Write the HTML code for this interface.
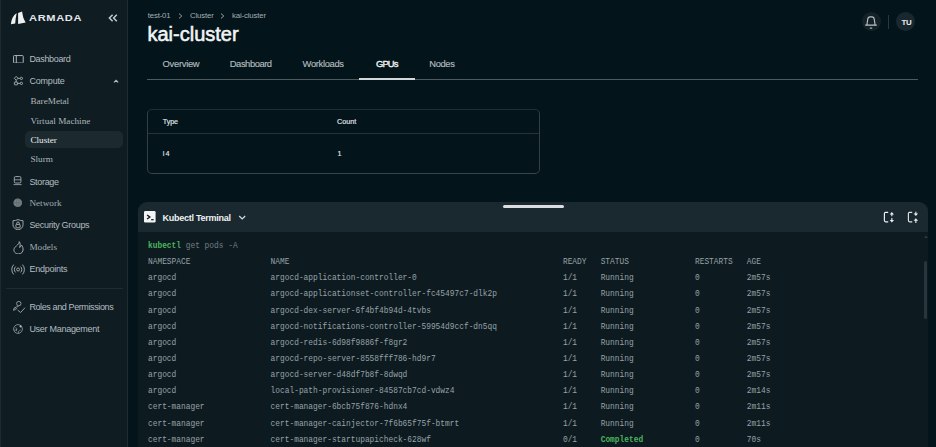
<!DOCTYPE html>
<html><head><meta charset="utf-8">
<style>
*{box-sizing:border-box;margin:0;padding:0}
html,body{width:936px;height:447px;overflow:hidden;background:#03141a;-webkit-font-smoothing:antialiased;font-family:"Liberation Sans",sans-serif;color:#c9d1d4}
.a{position:absolute;white-space:nowrap;line-height:1}
#side{position:absolute;left:0;top:0;width:128px;height:447px;background:#0f1c22;border-right:1px solid #1e2b31;border-left:1px solid #20292d}
.brand{left:27.9px;top:14px;font-size:8.4px;font-weight:bold;letter-spacing:0.5px;color:#e4e8ea;transform-origin:0 0;transform:scaleX(1.32)}
.nav{font-size:9px;color:#b3bdc1;left:28.4px}
.sub{font-family:"Liberation Serif",serif;font-size:9.2px;color:#aeb8bc;left:29.4px}
.ic{position:absolute}
.selbox{position:absolute;left:24px;top:130.6px;width:97.6px;height:17.2px;background:#1c2a30;border-radius:5px}
.crumb{font-size:7.8px;color:#a4aeb2;top:11.5px;letter-spacing:-0.15px}
.title{left:147.5px;top:24px;font-size:20px;font-weight:normal;-webkit-text-stroke:0.55px #f2f4f5;letter-spacing:0px;color:#f2f4f5}
.tab{top:58.8px;font-size:9.4px;color:#b2bbbf;letter-spacing:-0.1px;-webkit-text-stroke:0.15px #b2bbbf}
.tab.act{color:#f2f4f5;-webkit-text-stroke:0.35px #f2f4f5;letter-spacing:-0.25px}
.tabline{position:absolute;left:147px;top:79px;width:771px;height:1.3px;background:#4d5a5f}
.tabact{position:absolute;left:359px;top:77.8px;width:56px;height:1.8px;background:#d3d8da}
.btnc{position:absolute;top:12.5px;width:19px;height:19px;border-radius:50%;background:#16242a}
.vdiv{position:absolute;left:888px;top:15px;width:1px;height:14px;background:#2a373c}
.card{position:absolute;left:147px;top:108.7px;width:392.5px;height:65px;border:1px solid #343f44;border-top-color:#232e33;border-bottom-color:#3a4549;border-radius:5px}
.card .hd{position:absolute;left:0;top:23px;width:100%;height:1px;background:#263237}
.t{font-size:7.2px;color:#e2e6e8;-webkit-text-stroke:0.15px #e2e6e8}
#term{position:absolute;left:138px;top:202px;width:790px;height:260px;background:#0d1b21;border-radius:9px 9px 0 0;overflow:hidden}
#term .head{position:absolute;left:0;top:0;width:100%;height:29.8px;background:#1a292f}
.handle{position:absolute;left:502.5px;top:205.3px;width:61.3px;height:3.2px;border-radius:1.5px;background:#dadee0}
pre{position:absolute;left:147.8px;top:238px;font-family:"Liberation Mono",monospace;font-size:8.6px;line-height:16.14px;color:#98a2a6;transform-origin:0 0;transform:scaleX(0.9143)}
.g{color:#4cb45c;font-weight:bold}
.dim{color:#737d81}
.sb{position:absolute;left:923.7px;top:261px;width:3.4px;height:58px;background:#27363c;border-radius:2px}
</style></head><body>
<div id="side">
  <svg class="ic" style="left:7.2px;top:9px" width="20" height="18" viewBox="0 0 20 18"><path d="M8.65 4.2 C5.5 6 3.2 10 3 15.3 L7.2 14.5 C7.4 11 7.9 7.5 8.65 4.2 Z" fill="#eef1f2"/><path d="M10.1 4 L14.1 2.6 C14.8 7.5 15.6 10.5 17.7 13.5 L10.1 15.1 Z" fill="#eef1f2"/></svg>
  <div class="a brand">ARMADA</div>
  <svg class="ic" style="left:107px;top:14.2px" width="10" height="8" viewBox="0 0 10 8"><path d="M4.6 0.8 L1.4 4 L4.6 7.2 M8.8 0.8 L5.6 4 L8.8 7.2" fill="none" stroke="#c4cccf" stroke-width="1.5"/></svg>

  <svg class="ic" style="left:12.3px;top:54.6px" width="11" height="8.6" viewBox="0 0 11 8.6"><rect x="0.55" y="0.55" width="9.7" height="7.5" rx="0.8" fill="none" stroke="#a9b3b7" stroke-width="1"/><line x1="3.3" y1="0.6" x2="3.3" y2="8" stroke="#a9b3b7" stroke-width="1"/></svg>
  <div class="a nav" style="top:54.5px;letter-spacing:-0.33px">Dashboard</div>

  <svg class="ic" style="left:12.3px;top:76.2px" width="11" height="9.5" viewBox="0 0 11 9.5"><path d="M3.2 0.4 L5.1 2.3 L3.2 4.2 L1.3 2.3 Z" fill="none" stroke="#a9b3b7" stroke-width="0.9"/><circle cx="8.4" cy="2.4" r="1.15" fill="none" stroke="#a9b3b7" stroke-width="0.9"/><rect x="1.4" y="6.1" width="3.2" height="2.7" rx="0.4" fill="none" stroke="#a9b3b7" stroke-width="0.9"/><circle cx="8.4" cy="7.4" r="1.15" fill="none" stroke="#a9b3b7" stroke-width="0.9"/><path d="M5.1 2.35 H7.2 M3.1 4.2 V6.1 M4.6 7.4 H7.2" stroke="#a9b3b7" stroke-width="0.9"/></svg>
  <div class="a nav" style="top:76.5px;letter-spacing:-0.19px">Compute</div>
  <svg class="ic" style="left:111.5px;top:79px" width="6" height="4.5" viewBox="0 0 6 4.5"><path d="M1.1 3.4 L3.1 1.4 L5.1 3.4" fill="none" stroke="#b4bec2" stroke-width="1.3"/></svg>

  <div class="selbox"></div>
  <div class="a sub" style="top:96.6px">BareMetal</div>
  <div class="a sub" style="top:116.5px">Virtual Machine</div>
  <div class="a sub" style="top:136.3px;color:#e8ecee">Cluster</div>
  <div class="a sub" style="top:155.3px">Slurm</div>

  <svg class="ic" style="left:12px;top:176px" width="9" height="10" viewBox="0 0 9 10"><rect x="1.3" y="0.6" width="6.6" height="6.4" rx="1.2" fill="none" stroke="#a9b3b7" stroke-width="0.9"/><path d="M1.3 3.8 H7.9 M0.5 8.6 H8.7" stroke="#a9b3b7" stroke-width="0.8"/></svg>
  <div class="a nav" style="top:177.5px;letter-spacing:-0.31px">Storage</div>

  <svg class="ic" style="left:11.6px;top:198px" width="9.5" height="9.5" viewBox="0 0 10 10"><circle cx="5" cy="5" r="4.6" fill="#737e82"/><path d="M0.8 5 H9.2 M5 0.6 C3 3 3 7 5 9.4 M5 0.6 C7 3 7 7 5 9.4" fill="none" stroke="#5b666a" stroke-width="0.6"/></svg>
  <div class="a nav" style="top:199px;font-family:'Liberation Serif',serif;font-size:9.2px;color:#a2acb0">Network</div>

  <svg class="ic" style="left:11.4px;top:218.6px" width="12" height="11.5" viewBox="0 0 12 11.5"><path d="M6 0.6 C4.3 1.4 2.7 1.7 1 1.7 V5.9 C1 8.5 3 10.2 6 10.9 C9 10.2 11 8.5 11 5.9 V1.7 C9.3 1.7 7.7 1.4 6 0.6 Z" fill="none" stroke="#a9b3b7" stroke-width="0.9"/><rect x="3.9" y="5.4" width="4.2" height="3.4" rx="0.5" fill="none" stroke="#a9b3b7" stroke-width="0.9"/><path d="M4.7 5.4 V4.3 A1.3 1.3 0 0 1 7.3 4.3 V5.4" fill="none" stroke="#a9b3b7" stroke-width="0.9"/></svg>
  <div class="a nav" style="top:221px;letter-spacing:-0.31px">Security Groups</div>

  <svg class="ic" style="left:12px;top:240.5px" width="11" height="13.5" viewBox="0 0 11 13.5"><path d="M6.2 0.6 C6.6 3 2.8 4.6 1.2 7.6 C0 10.4 2.4 12.9 5.4 12.9 C8.4 12.9 10.3 10.8 10.1 8 C10 6.2 9.2 4.8 8.4 4 C8.2 5.4 7.4 6.2 6.6 6.4 C7.4 4.2 7.4 2 6.2 0.6 Z" fill="none" stroke="#a9b3b7" stroke-width="0.95"/></svg>
  <div class="a nav" style="top:243px;font-family:'Liberation Serif',serif;font-size:9.2px;color:#a2acb0">Models</div>

  <svg class="ic" style="left:9.8px;top:263.5px" width="14.2" height="11" viewBox="0 0 15 11" preserveAspectRatio="none"><circle cx="7.5" cy="5.5" r="1.5" fill="none" stroke="#a9b3b7" stroke-width="0.9"/><path d="M4.9 2.6 A3.8 3.8 0 0 0 4.9 8.4 M10.1 2.6 A3.8 3.8 0 0 1 10.1 8.4 M2.9 0.6 A6.8 6.8 0 0 0 2.9 10.4 M12.1 0.6 A6.8 6.8 0 0 1 12.1 10.4" fill="none" stroke="#a9b3b7" stroke-width="0.95"/></svg>
  <div class="a nav" style="top:265px;letter-spacing:-0.23px">Endpoints</div>

  <div style="position:absolute;left:5px;top:288px;width:116.5px;height:1px;background:#1f2c32"></div>

  <svg class="ic" style="left:11px;top:299.5px" width="14" height="14" viewBox="0 0 14 14"><circle cx="6.8" cy="3.6" r="2.2" fill="none" stroke="#9aa4a8" stroke-width="0.9"/><path d="M1.5 10.5 C1.5 8.2 3.6 6.6 6.4 6.6 M1.8 8.3 C2.8 7.6 4 7.6 4.6 8.6 C3.6 9.8 2.6 10 1.6 10" fill="none" stroke="#9aa4a8" stroke-width="0.9"/><path d="M5.6 10 L8.6 12.5 L13 7.7" fill="none" stroke="#9aa4a8" stroke-width="0.95"/></svg>
  <div class="a nav" style="top:302.5px;letter-spacing:-0.39px">Roles and Permissions</div>

  <svg class="ic" style="left:11.9px;top:323.6px" width="10" height="10" viewBox="0 0 10 10"><circle cx="5" cy="5" r="4.4" fill="none" stroke="#8a9498" stroke-width="0.9"/><path d="M2.6 3.2 C3.4 4 3.8 5.4 3.4 7.2 M5.4 9 C5.2 7.4 6 6.2 7.6 6 M1.2 6.2 C2.4 6 3.6 6.2 4.4 5.2" fill="none" stroke="#8a9498" stroke-width="0.8"/><circle cx="7.6" cy="2.4" r="1.1" fill="#b0babe"/></svg>
  <div class="a nav" style="top:324.5px;letter-spacing:-0.28px">User Management</div>
</div>

<div class="a crumb" style="left:147.7px">test-01</div>
<svg class="ic" style="left:178px;top:12.5px" width="5" height="6" viewBox="0 0 5 6"><path d="M1 0.6 L3.8 3 L1 5.4" fill="none" stroke="#a4aeb2" stroke-width="0.9"/></svg>
<div class="a crumb" style="left:190px">Cluster</div>
<svg class="ic" style="left:219.5px;top:12.5px" width="5" height="6" viewBox="0 0 5 6"><path d="M1 0.6 L3.8 3 L1 5.4" fill="none" stroke="#a4aeb2" stroke-width="0.9"/></svg>
<div class="a crumb" style="left:232px">kai-cluster</div>
<div class="a title">kai-cluster</div>

<div class="a tab" style="left:162.6px;letter-spacing:-0.29px">Overview</div>
<div class="a tab" style="left:229.8px;letter-spacing:-0.45px">Dashboard</div>
<div class="a tab" style="left:302.6px;letter-spacing:-0.34px">Workloads</div>
<div class="a tab act" style="left:376px;letter-spacing:-0.85px">GPUs</div>
<div class="a tab" style="left:429.3px;letter-spacing:-0.38px">Nodes</div>
<div class="tabline"></div><div class="tabact"></div>

<div class="btnc" style="left:862px;top:12.4px;width:18.6px;height:18.6px;background:#142228"></div>
<svg class="ic" style="left:864px;top:14.5px" width="14" height="15" viewBox="0 0 14 15"><path d="M2.9 9.9 L3.7 4.6 C3.9 2.8 4.6 1.9 6 1.9 H8 C9.4 1.9 10.1 2.8 10.3 4.6 L11.1 9.9 M1.2 10.1 H12.8" fill="none" stroke="#b9c2c6" stroke-width="1.1"/><path d="M5.8 13.1 H8.2" stroke="#b9c2c6" stroke-width="1.1"/></svg>
<div class="vdiv"></div>
<div class="btnc" style="left:896.1px;top:12.4px;width:19px;height:19px;background:#19282e"></div>
<div class="a" style="left:901.6px;top:18.5px;font-size:7.9px;font-weight:bold;color:#e8ecee;letter-spacing:-0.5px">TU</div>

<div class="card"><div class="hd"></div></div>
<div class="a t" style="left:162.8px;top:118px;letter-spacing:-0.1px">Type</div>
<div class="a t" style="left:337px;top:118px">Count</div>
<div class="a t" style="left:162.8px;top:150.3px;letter-spacing:1.2px">l4</div>
<div class="a t" style="left:337.4px;top:150.3px">1</div>

<div id="term"><div class="head"></div></div>
<div class="handle"></div>
<svg class="ic" style="left:144.2px;top:211.2px" width="11.6" height="11.6" viewBox="0 0 12 12"><rect x="0" y="0" width="12" height="12" rx="1.4" fill="#f2f4f5"/><path d="M3.2 4.1 L6 6.2 L3.2 8.3" fill="none" stroke="#0d1b21" stroke-width="1.5"/><path d="M7.4 9 H10" stroke="#0d1b21" stroke-width="1.3"/></svg>
<div class="a" style="left:162.6px;top:214px;font-size:9px;font-weight:bold;color:#eef1f2;letter-spacing:-0.27px">Kubectl Terminal</div>
<svg class="ic" style="left:238.2px;top:215.3px" width="8.4" height="5" viewBox="0 0 8 5"><path d="M1 1 L4 4 L7 1" fill="none" stroke="#d6dcdf" stroke-width="1.2"/></svg>
<svg class="ic" style="left:883px;top:211.4px" width="12" height="13" viewBox="0 0 12 13"><path d="M5.2 1.4 H2.6 Q1.4 1.4 1.4 2.6 V9.6 Q1.4 10.8 2.6 10.8 H5.2" fill="none" stroke="#eef1f2" stroke-width="1.15"/><path d="M6.7 3.4 L8.85 0.9 L11 3.4 Z M6.7 9 L8.85 11.6 L11 9 Z" fill="#eef1f2"/><path d="M8.85 3 V5.3 M8.85 7 V9.2" stroke="#eef1f2" stroke-width="1.1"/></svg>
<svg class="ic" style="left:907.4px;top:211.4px" width="12" height="13" viewBox="0 0 12 13"><path d="M5.2 1.4 H2.6 Q1.4 1.4 1.4 2.6 V9.6 Q1.4 10.8 2.6 10.8 H5.2" fill="none" stroke="#dfe3e5" stroke-width="1.15"/><path d="M6.6 2.6 L11.1 2.6 L8.85 5.1 Z M6.6 9.7 L11.1 9.7 L8.85 7.2 Z" fill="#eef1f2"/><path d="M8.85 0.7 V3 M8.85 9.3 V12" stroke="#eef1f2" stroke-width="1.1"/></svg>
<div class="sb"></div>
<svg class="ic" style="left:923.5px;top:234.5px" width="4" height="3" viewBox="0 0 4 3"><path d="M0 3 L2 0.5 L4 3 Z" fill="#2c3a40"/></svg>
<pre><span class="g">kubectl</span> <span class="dim">get pods -A</span>
NAMESPACE                 NAME                                                          READY   STATUS              RESTARTS   AGE
argocd                    argocd-application-controller-0                               1/1     Running             0          2m57s
argocd                    argocd-applicationset-controller-fc45497c7-dlk2p              1/1     Running             0          2m57s
argocd                    argocd-dex-server-6f4bf4b94d-4tvbs                            1/1     Running             0          2m57s
argocd                    argocd-notifications-controller-59954d9ccf-dn5qq              1/1     Running             0          2m57s
argocd                    argocd-redis-6d98f9886f-f8gr2                                 1/1     Running             0          2m57s
argocd                    argocd-repo-server-8558fff786-hd9r7                           1/1     Running             0          2m57s
argocd                    argocd-server-d48df7b8f-8dwqd                                 1/1     Running             0          2m57s
argocd                    local-path-provisioner-84587cb7cd-vdwz4                       1/1     Running             0          2m14s
cert-manager              cert-manager-6bcb75f876-hdnx4                                 1/1     Running             0          2m11s
cert-manager              cert-manager-cainjector-7f6b65f75f-btmrt                      1/1     Running             0          2m11s
cert-manager              cert-manager-startupapicheck-628wf                            0/1     <span class="g">Completed</span>           0          70s
</pre>
</body></html>
